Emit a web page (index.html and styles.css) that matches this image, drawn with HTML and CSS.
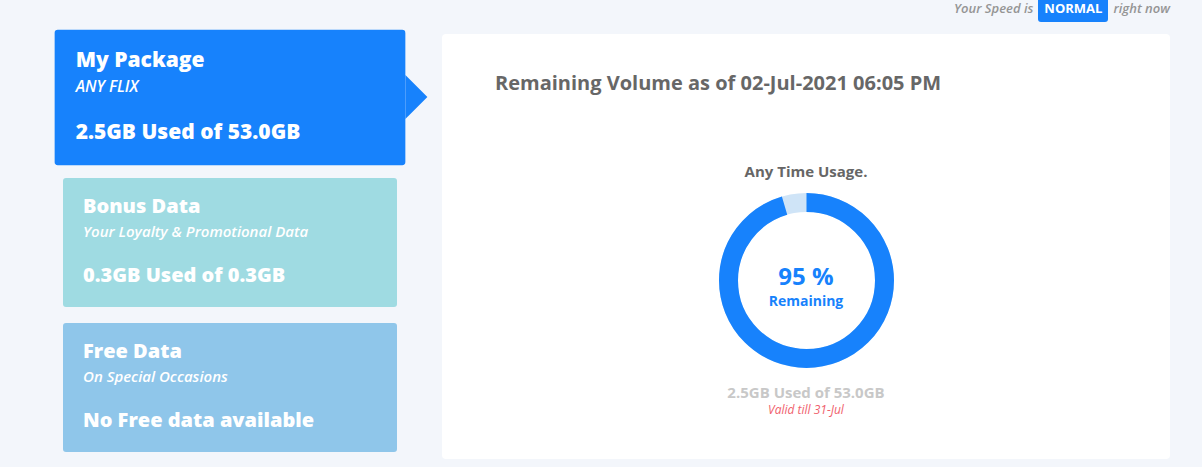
FILE: index.html
```html
<!DOCTYPE html>
<html lang="en">
<head>
<meta charset="utf-8">
<title>Usage</title>
<link rel="stylesheet" href="styles.css">
</head>
<body>
<div class="topbar">
  <span class="speed-text">Your Speed is</span>
  <span class="badge">NORMAL</span>
  <span class="speed-text">right now</span>
</div>
<div class="main">
  <div class="cards">
    <div class="card card-active">
      <div class="card-title">My Package</div>
      <div class="card-sub">ANY FLIX</div>
      <div class="card-usage">2.5GB Used of 53.0GB</div>
    </div>
    <div class="card card-bonus">
      <div class="card-title">Bonus Data</div>
      <div class="card-sub">Your Loyalty &amp; Promotional Data</div>
      <div class="card-usage">0.3GB Used of 0.3GB</div>
    </div>
    <div class="card card-free">
      <div class="card-title">Free Data</div>
      <div class="card-sub">On Special Occasions</div>
      <div class="card-usage">No Free data available</div>
    </div>
  </div>
  <div class="panel">
    <div class="panel-title">Remaining Volume as of 02-Jul-2021 06:05 PM</div>
    <div class="usage">
      <div class="usage-label">Any Time Usage.</div>
      <div class="donut">
        <svg class="donut-svg" width="175" height="175" viewBox="0 0 175 175">
          <circle cx="87.5" cy="87.5" r="78" fill="none" stroke="#cfe4f7" stroke-width="19"/>
          <circle cx="87.5" cy="87.5" r="78" fill="none" stroke="#1782fc" stroke-width="19"
                  stroke-dasharray="467 490.09" transform="rotate(-90 87.5 87.5)"/>
        </svg>
        <div class="donut-center">
          <div class="pct">95 %</div>
          <div class="pct-label">Remaining</div>
        </div>
      </div>
      <div class="used">2.5GB Used of 53.0GB</div>
      <div class="valid">Valid till 31-Jul</div>
    </div>
  </div>
</div>
</body>
</html>
```
FILE: styles.css
```css
html, body {
  margin: 0;
  padding: 0;
}
body {
  background: #f3f6fb;
  font-family: "Open Sans", "Liberation Sans", sans-serif;
  width: 1202px;
  height: 467px;
  overflow: hidden;
}
.topbar {
  display: flex;
  justify-content: flex-end;
  align-items: flex-start;
  gap: 5px;
  height: 22px;
  padding-right: 32px;
}
.speed-text {
  font-size: 13px;
  line-height: 16px;
  font-style: italic;
  font-weight: 600;
  color: #959595;
}
.badge {
  background: #1782fc;
  color: #fff;
  font-size: 13px;
  font-weight: 700;
  line-height: 16px;
  padding: 0 6px 6px;
  border-radius: 0 0 3px 3px;
}
.main {
  display: flex;
  align-items: flex-start;
  margin-top: 11px;
  padding-left: 63px;
  gap: 45px;
}
.cards {
  display: flex;
  flex-direction: column;
  gap: 16px;
  width: 334px;
}
.card {
  position: relative;
  height: 129px;
  box-sizing: border-box;
  padding: 16px 20px 0;
  border-radius: 3px;
  color: #fff;
}
.card-active {
  background: #1782fc;
  transform: scale(1.05);
}
.card-active::after {
  content: "";
  position: absolute;
  right: -21px;
  top: 43px;
  border-left: 21px solid #1782fc;
  border-top: 21.5px solid transparent;
  border-bottom: 21.5px solid transparent;
}
.card-bonus {
  background: #9fdbe2;
}
.card-free {
  background: #8fc6ea;
}
.card-title {
  font-size: 20px;
  line-height: 24px;
  font-weight: 800;
}
.card-sub {
  margin-top: 4px;
  font-size: 15px;
  line-height: 18px;
  font-style: italic;
  font-weight: 600;
}
.card-usage {
  margin-top: 23px;
  font-size: 20px;
  line-height: 24px;
  font-weight: 800;
}
.panel {
  margin-top: 1px;
  width: 728px;
  height: 425px;
  box-sizing: border-box;
  background: #fff;
  border-radius: 4px;
  padding: 37px 0 0 53px;
}
.panel-title {
  font-size: 20px;
  line-height: 24px;
  font-weight: 700;
  color: #676767;
}
.usage {
  display: flex;
  flex-direction: column;
  align-items: center;
  margin-left: -53px;
  margin-top: 66px;
}
.usage-label {
  font-size: 15px;
  line-height: 20px;
  font-weight: 700;
  color: #666;
}
.donut {
  display: grid;
  margin-top: 12px;
}
.donut-svg,
.donut-center {
  grid-area: 1 / 1;
}
.donut-svg {
  display: block;
}
.donut-center {
  display: flex;
  flex-direction: column;
  align-items: center;
  justify-content: center;
  padding-top: 8px;
  color: #1782fc;
}
.pct {
  font-size: 24px;
  line-height: 32px;
  font-weight: 700;
}
.pct-label {
  font-size: 14px;
  line-height: 18px;
  font-weight: 700;
}
.used {
  margin-top: 14px;
  font-size: 15px;
  line-height: 20px;
  font-weight: 700;
  color: #c8c8c8;
}
.valid {
  font-size: 12px;
  line-height: 15px;
  font-style: italic;
  color: #f0616d;
}
```
